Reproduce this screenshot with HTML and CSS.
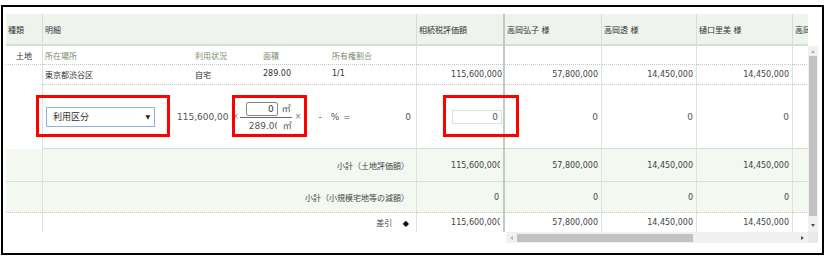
FILE: index.html
```html
<!DOCTYPE html>
<html lang="ja">
<head>
    <meta charset="UTF-8">
    <title>相続財産一覧</title>
    <link rel="stylesheet" href="styles.css">
</head>
<body>

    <div class="sheet">
        <div class="sheet__panes">

            <!-- frozen columns -->
            <div class="pane-left">
                <table class="grid">
                    <colgroup>
                        <col class="col-kind">
                        <col class="col-detail">
                        <col class="col-value">
                    </colgroup>
                    <tr class="row-head">
                        <th>種類</th>
                        <th>明細</th>
                        <th class="last">相続税評価額</th>
                    </tr>
                    <tr class="row-label">
                        <td class="kind">土地</td>
                        <td>
                            <div class="fields fields--label">
                                <span>所在場所</span><span>利用状況</span><span>面積</span><span>所有権割合</span>
                            </div>
                        </td>
                        <td class="last"></td>
                    </tr>
                    <tr class="row-data">
                        <td class="kind kind--open"></td>
                        <td>
                            <div class="fields">
                                <span>東京都渋谷区</span><span>自宅</span><span>289.00</span><span>1/1</span>
                            </div>
                        </td>
                        <td class="num num--full last">115,600,000</td>
                    </tr>
                    <tr class="row-calc">
                        <td class="kind kind--open"></td>
                        <td>
                            <div class="calc">
                                <div class="select-box">利用区分<i class="select-box__arrow">▼</i></div>
                                <span class="calc__amount">115,600,000</span>
                                <span class="calc__times">×</span>
                                <div class="frac">
                                    <div class="frac__top"><span class="frac__input">0</span><span class="unit">㎡</span></div>
                                    <div class="frac__bottom"><span class="frac__area">289.00</span><span class="unit">㎡</span></div>
                                </div>
                                <span class="calc__times">×</span>
                                <span class="calc__rate">-</span>
                                <span class="calc__pct">%</span>
                                <span class="calc__eq">=</span>
                                <span class="calc__result">0</span>
                            </div>
                        </td>
                        <td class="num last"><span class="value-input">0</span></td>
                    </tr>
                    <tr class="row-sum">
                        <td class="kind"></td>
                        <td class="label-right">小計（土地評価額）</td>
                        <td class="num last"><div class="clip"><span>115,600,000</span></div></td>
                    </tr>
                    <tr class="row-sum2">
                        <td class="kind"></td>
                        <td class="label-right">小計（小規模宅地等の減額）</td>
                        <td class="num num--zero last">0</td>
                    </tr>
                    <tr class="row-diff">
                        <td class="kind"></td>
                        <td class="label-right">差引 <span class="diamond">◆</span></td>
                        <td class="num last"><div class="clip"><span>115,600,000</span></div></td>
                    </tr>
                </table>
            </div>

            <!-- scrolling heirs columns -->
            <div class="pane-right">
                <div class="pane-right__body">
                    <table class="grid grid--right">
                        <colgroup>
                            <col class="col-heir1">
                            <col class="col-heir2">
                            <col class="col-heir3">
                            <col class="col-heir4">
                        </colgroup>
                        <tr class="row-head">
                            <th>高岡弘子 様</th>
                            <th>高岡透 様</th>
                            <th>樋口里美 様</th>
                            <th>高岡昭 様</th>
                        </tr>
                        <tr class="row-label">
                            <td></td><td></td><td></td><td></td>
                        </tr>
                        <tr class="row-data">
                            <td class="num">57,800,000</td>
                            <td class="num">14,450,000</td>
                            <td class="num">14,450,000</td>
                            <td class="num">14,450,000</td>
                        </tr>
                        <tr class="row-calc">
                            <td class="num">0</td>
                            <td class="num">0</td>
                            <td class="num">0</td>
                            <td class="num">0</td>
                        </tr>
                        <tr class="row-sum">
                            <td class="num">57,800,000</td>
                            <td class="num">14,450,000</td>
                            <td class="num">14,450,000</td>
                            <td class="num">14,450,000</td>
                        </tr>
                        <tr class="row-sum2">
                            <td class="num">0</td>
                            <td class="num">0</td>
                            <td class="num">0</td>
                            <td class="num">0</td>
                        </tr>
                        <tr class="row-diff">
                            <td class="num">57,800,000</td>
                            <td class="num">14,450,000</td>
                            <td class="num">14,450,000</td>
                            <td class="num">14,450,000</td>
                        </tr>
                    </table>
                </div>
                <div class="vscroll">
                    <span class="arrow arrow--up"></span>
                    <span class="vscroll__thumb"></span>
                    <span class="arrow arrow--down"></span>
                </div>
                <div class="hscroll">
                    <span class="arrow arrow--left"></span>
                    <span class="hscroll__thumb"></span>
                    <span class="arrow arrow--right"></span>
                </div>
                <div class="scroll-corner"></div>
            </div>

        </div>

        <!-- annotation frames -->
        <div class="mark mark--select"></div>
        <div class="mark mark--area"></div>
        <div class="mark mark--value"></div>
    </div>

</body>
</html>
```

FILE: styles.css
```css
body{
    margin: 0;
    background: #fff;
    color: #333;
    font-family: "DejaVu Sans", "Noto Sans CJK JP", sans-serif;
    font-size: 8px;
}
.sheet{
    position: relative;
    box-sizing: border-box;
    width: 823px;
    height: 250px;
    margin: 5px 0 0 1px;
    border: 2px solid #000;
    padding: 7px 0 0 3px;
}
.sheet__panes{
    display: flex;
    align-items: flex-start;
}

/* grid tables */
.grid{
    border-collapse: separate;
    border-spacing: 0;
    table-layout: fixed;
}
.grid th,
.grid td{
    box-sizing: border-box;
    padding: 0 2px;
    border-right: 1px solid #dce5dc;
    white-space: nowrap;
    overflow: hidden;
    vertical-align: middle;
}
.grid th{
    height: 32px;
    background: #eef4ed;
    border-right-color: #d3dfd3;
    border-bottom: 2px solid #d5e0d5;
    font-weight: normal;
    text-align: left;
    color: #333;
}
.grid td.last,
.grid th.last{
    border-right: none;
}
.row-label td{
    height: 19px;
    border-bottom: 1px dotted #c6c6c6;
}
.row-data td{
    height: 20px;
    border-bottom: 1px dotted #c6c6c6;
}
.row-calc td{
    height: 64px;
    border-bottom: 1px solid #d5e0d5;
    color: #555;
    font-size: 9px;
}
.row-sum td{
    height: 33px;
    background: #f3f8f1;
    border-bottom: 1px solid #d5e0d5;
}
.row-sum2 td{
    height: 31px;
    background: #f3f8f1;
    border-bottom: 1px dotted #c6c6c6;
}
.row-diff td{
    height: 19px;
}
.grid td.kind--open{
    border-bottom: none;
}
.kind{
    text-align: center;
}
.num{
    text-align: right;
    color: #444;
}
.label-right{
    text-align: right;
    padding-right: 7px !important;
    color: #444;
}
.diamond{
    margin-left: 8px;
    color: #111;
}

/* frozen pane */
.pane-left{
    width: 497px;
    border-right: 2px solid #becdbe;
}
.pane-left .grid{
    width: 497px;
}
.col-kind{ width: 37px; }
.col-detail{ width: 374px; }
.col-value{ width: 86px; }
.pane-left .num{
    padding-right: 1px;
}
.pane-left .num--zero{
    padding-right: 4px;
}
.clip{
    overflow: hidden;
    margin-right: 2px;
}
.clip>span{
    margin-right: -2px;
}

.fields{
    display: grid;
    grid-template-columns: 150px 68px 69px auto;
}
.fields--label{
    color: #7b8c70;
}

/* calculation row */
.calc{
    display: flex;
    align-items: center;
    padding-left: 1px;
    padding-right: 3px;
}
.select-box{
    box-sizing: border-box;
    display: flex;
    align-items: center;
    justify-content: space-between;
    width: 109px;
    height: 20px;
    padding: 0 4px 0 6px;
    border: 1px solid #8db3de;
    background: #fff;
    color: #333;
}
.select-box__arrow{
    font-style: normal;
    font-size: 6px;
    color: #222;
}
.calc__amount{
    width: 52px;
    margin-left: 22px;
    overflow: hidden;
}
.calc__times{
    margin-left: 3px;
    color: #777;
    font-size: 8px;
}
.frac{
    width: 52px;
    margin-left: 1px;
}
.frac__top{
    display: flex;
    align-items: center;
    height: 17px;
    padding-left: 6px;
    border-bottom: 1px solid #666;
}
.frac__input{
    box-sizing: border-box;
    width: 32px;
    height: 14px;
    padding-right: 3px;
    border: 1px solid #888;
    border-radius: 2px;
    text-align: right;
    line-height: 12px;
    color: #333;
}
.unit{
    margin-left: 4px;
    color: #555;
}
.frac__bottom{
    display: flex;
    align-items: center;
    height: 15px;
    padding-left: 9px;
}
.frac__area{
    width: 28px;
    overflow: hidden;
}
.frac__bottom .unit{
    margin-left: 6px;
}
.calc__rate{
    margin-left: 17px;
}
.calc__pct{
    margin-left: 9px;
}
.calc__eq{
    margin-left: 4px;
}
.calc__result{
    margin-left: auto;
}
.value-input{
    display: inline-block;
    box-sizing: border-box;
    width: 50px;
    height: 14px;
    padding-right: 3px;
    border: 1px solid #dedede;
    text-align: right;
    line-height: 12px;
    vertical-align: middle;
}

/* scrolling pane */
.pane-right{
    display: grid;
    grid-template-columns: 303px 10px;
    grid-template-rows: 32px 186px 11px;
}
.pane-right__body{
    grid-column: 1;
    grid-row: 1 / span 2;
    overflow: hidden;
}
.grid--right{
    width: 384px;
}
.col-heir1{ width: 97px; }
.col-heir2{ width: 95px; }
.col-heir3{ width: 96px; }
.col-heir4{ width: 96px; }
.grid--right .num{
    padding-right: 3px;
}

.vscroll{
    grid-column: 2;
    grid-row: 2;
    display: flex;
    flex-direction: column;
    align-items: center;
    background: #f0f0f0;
}
.vscroll__thumb{
    width: 8px;
    height: 160px;
    background: #c2c2c2;
}
.hscroll{
    grid-column: 1;
    grid-row: 3;
    display: flex;
    align-items: center;
    margin-left: 1px;
    background: #f0f0f0;
}
.hscroll__thumb{
    width: 176px;
    height: 8px;
    background: #c2c2c2;
}
.scroll-corner{
    grid-column: 2;
    grid-row: 3;
    background: #e9e9e9;
}
.arrow{
    display: block;
    width: 0;
    height: 0;
    border: 2px solid transparent;
}
.arrow--up{
    margin: 4px 0 3px;
    border-bottom: 3px solid #b0b0b0;
    border-top-width: 0;
}
.arrow--down{
    margin: auto 0 5px;
    border-top: 3px solid #505050;
    border-bottom-width: 0;
}
.arrow--left{
    margin: 0 4px 0 4px;
    border-right: 3px solid #b0b0b0;
    border-left-width: 0;
}
.arrow--right{
    margin: 0 4px 0 auto;
    border-left: 3px solid #505050;
    border-right-width: 0;
}

/* red annotation frames */
.mark{
    position: absolute;
    top: 88px;
    height: 42px;
    box-sizing: border-box;
    border: 3px solid #f00;
}
.mark--select{
    left: 33px;
    width: 134px;
}
.mark--area{
    left: 229px;
    width: 75px;
}
.mark--value{
    left: 440px;
    width: 76px;
}
```
